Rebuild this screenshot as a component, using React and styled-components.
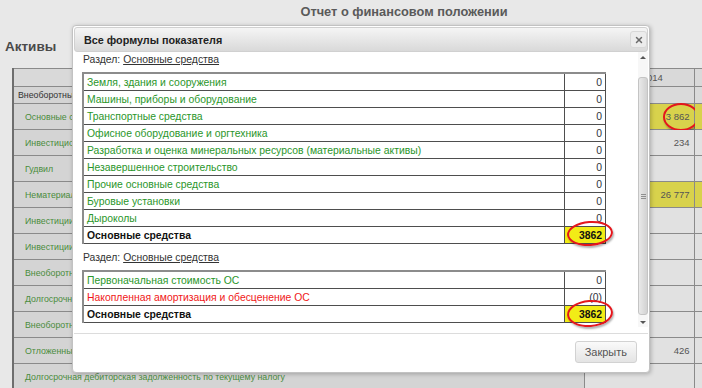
import React from "react";
import styled, { createGlobalStyle } from "styled-components";
import { X } from "lucide-react";

const GlobalStyle = createGlobalStyle`
  body {
    margin: 0;
    font-family: "Liberation Sans", Arial, sans-serif;
  }
`;

// фон: строки отчета
const reportRows = [
  { label: "Внеоборотные активы", group: true },
  { label: "Основные средства", value: "3 862", mark: true, circled: true },
  { label: "Инвестиционная недвижимость", value: "234" },
  { label: "Гудвил" },
  { label: "Нематериальные активы", value: "26 777", mark: true },
  { label: "Инвестиции в ассоциированные компании" },
  { label: "Инвестиции в совместные предприятия" },
  { label: "Внеоборотные биологические активы" },
  { label: "Долгосрочная торговая и прочая дебиторская задолженность" },
  { label: "Внеоборотные финансовые активы" },
  { label: "Отложенные налоговые активы", value: "426" },
  { label: "Долгосрочная дебиторская задолженность по текущему налогу" },
];

const firstSection = [
  "Земля, здания и сооружения",
  "Машины, приборы и оборудование",
  "Транспортные средства",
  "Офисное оборудование и оргтехника",
  "Разработка и оценка минеральных ресурсов (материальные активы)",
  "Незавершенное строительство",
  "Прочие основные средства",
  "Буровые установки",
  "Дыроколы",
];

const secondSection = [
  { label: "Первоначальная стоимость ОС", value: "0", tone: "green" },
  { label: "Накопленная амортизация и обесценение ОС", value: "(0)", tone: "red" },
];

const App = () => {
  return (
    <Page>
      <GlobalStyle />
      <ReportTitle>Отчет о финансовом положении</ReportTitle>
      <SectionTitle>Активы</SectionTitle>

      <ReportTable>
        <colgroup>
          <col style={{ width: 571 }} />
          <col style={{ width: 110 }} />
          <col style={{ width: 100 }} />
        </colgroup>
        <tbody>
          <tr>
            <HeadCell />
            <HeadCell>31.12.2014</HeadCell>
            <HeadCell>31.12.2013</HeadCell>
          </tr>
          {reportRows.map((row, i) => (
            <tr key={i}>
              <LabelCell group={row.group}>{row.label}</LabelCell>
              <ValueCell group={row.group} mark={row.mark}>
                {row.value}
                {row.circled && <BgCircle />}
              </ValueCell>
              <ValueCell group={row.group} mark={row.mark} />
            </tr>
          ))}
        </tbody>
      </ReportTable>

      <Dialog>
        <TitleBar>
          <DialogTitle>Все формулы показателя</DialogTitle>
          <CloseButton>
            <X size={10} strokeWidth={3.5} color="#6a6a6a" />
          </CloseButton>
        </TitleBar>

        <DialogBody>
          <Content>
            <SectionLine>
              Раздел: <SectionLink>Основные средства</SectionLink>
            </SectionLine>
            <FormulaTable>
              <tbody>
                {firstSection.map((label, i) => (
                  <tr key={i}>
                    <FCell tone="green">{label}</FCell>
                    <FNum>0</FNum>
                  </tr>
                ))}
                <tr>
                  <FCell total>Основные средства</FCell>
                  <FNum total>
                    3862
                    <Ring top={-6} height={26} />
                  </FNum>
                </tr>
              </tbody>
            </FormulaTable>

            <SectionLine spaced>
              Раздел: <SectionLink>Основные средства</SectionLink>
            </SectionLine>
            <FormulaTable>
              <tbody>
                {secondSection.map((row, i) => (
                  <tr key={i}>
                    <FCell tone={row.tone}>{row.label}</FCell>
                    <FNum>{row.value}</FNum>
                  </tr>
                ))}
                <tr>
                  <FCell total>Основные средства</FCell>
                  <FNum total>
                    3862
                    <Ring top={-6} height={28} />
                  </FNum>
                </tr>
              </tbody>
            </FormulaTable>
          </Content>

          <Scrollbar>
            <Arrow up />
            <Track>
              <Thumb>
                <Grip />
              </Thumb>
            </Track>
            <Arrow />
          </Scrollbar>
        </DialogBody>

        <ButtonPane>
          <Button>Закрыть</Button>
        </ButtonPane>
      </Dialog>
    </Page>
  );
};

const Page = styled.div`
  position: relative;
  width: 702px;
  height: 388px;
  overflow: hidden;
  background: #e8e8e8;
`;

const ReportTitle = styled.h1`
  margin: 0;
  padding: 3px 0 0 106px;
  text-align: center;
  font-size: 12.8px;
  line-height: 18px;
  color: #5a5a5a;
`;

const SectionTitle = styled.h2`
  margin: 17px 0 0 5px;
  font-size: 13.5px;
  line-height: 18px;
  color: #4a4a4a;
`;

const ReportTable = styled.table`
  margin: 12px 0 0 12px;
  width: 781px;
  table-layout: fixed;
  border-collapse: collapse;
  border-left: 2px solid #6e6e6e;
  font-size: 8.8px;
  color: #555;
`;

const HeadCell = styled.td`
  height: 17px;
  padding: 0;
  border: 1px solid #8a8a8a;
  background: #d9d9d9;
  font-size: 9.5px;
  text-align: center;
  white-space: nowrap;
  overflow: hidden;
`;

const LabelCell = styled.td`
  height: ${(p) => (p.group ? "16px" : "25px")};
  padding: 0 0 0 ${(p) => (p.group ? "4px" : "11px")};
  border: 1px solid #8a8a8a;
  background: #d4d4d4;
  color: ${(p) => (p.group ? "#333" : "#4a8c3c")};
  white-space: nowrap;
  overflow: hidden;
`;

const ValueCell = styled.td`
  position: relative;
  padding: 0 4px 0 0;
  border: 1px solid #8a8a8a;
  background: ${(p) => (p.mark ? "#d8d24c" : p.group ? "#dadada" : "#e1e1e1")};
  font-size: 9.5px;
  text-align: right;
  white-space: nowrap;
`;

const BgCircle = styled.span`
  position: absolute;
  left: 78px;
  top: -1px;
  width: 32px;
  height: 24px;
  border: 2.5px solid #e4161c;
  border-radius: 50%;
  box-shadow: 1px 2px 2px rgba(0, 0, 0, 0.3);
`;

const Dialog = styled.div`
  position: absolute;
  left: 72px;
  top: 25px;
  width: 578px;
  height: 348px;
  box-sizing: border-box;
  padding: 1px;
  display: flex;
  flex-direction: column;
  border: 1px solid #c2c2c2;
  border-radius: 4px;
  background: #fff;
  box-shadow: 1px 1px 4px rgba(0, 0, 0, 0.25);
  font-size: 10.4px;
  color: #333;
`;

const TitleBar = styled.div`
  height: 25px;
  box-sizing: border-box;
  display: flex;
  align-items: center;
  justify-content: space-between;
  padding: 0 0 0 9px;
  border: 1px solid #d0d0d0;
  border-radius: 3px;
  background: linear-gradient(#f5f5f5, #d9d9d9);
`;

const DialogTitle = styled.span`
  font-size: 10.8px;
  font-weight: bold;
  color: #222;
`;

const CloseButton = styled.span`
  width: 15px;
  height: 15px;
  display: flex;
  align-items: center;
  justify-content: center;
  border: 1px solid #d8d8d8;
  border-radius: 3px;
  background: #ececec;
`;

const DialogBody = styled.div`
  height: 281px;
  display: flex;
`;

const Content = styled.div`
  flex: 1;
  padding: 1px 0 0 8px;
  overflow: hidden;
`;

const SectionLine = styled.div`
  line-height: 13px;
  margin-top: ${(p) => (p.spaced ? "7px" : "0")};
  padding-left: 1px;
`;

const SectionLink = styled.span`
  text-decoration: underline;
`;

const FormulaTable = styled.table`
  margin-top: 6px;
  width: 524px;
  table-layout: fixed;
  border-collapse: collapse;
  border-left: 2px solid #8c8c8c;
  border-top: 2px solid #8c8c8c;
`;

const FCell = styled.td`
  height: 16px;
  padding: 0 3px;
  line-height: 15px;
  border: 1px solid #4e4e4e;
  font-weight: ${(p) => (p.total ? "bold" : "normal")};
  color: ${(p) =>
    p.tone === "green" ? "#2a962a" : p.tone === "red" ? "#f01818" : "#111"};
  white-space: nowrap;
`;

const FNum = styled.td`
  position: relative;
  width: 34px;
  padding: 0 3px;
  border: 1px solid #4e4e4e;
  text-align: right;
  font-weight: ${(p) => (p.total ? "bold" : "normal")};
  background: ${(p) => (p.total ? "#f2ec16" : "#fff")};
  color: ${(p) => (p.total ? "#111" : "#2f3440")};
`;

const Ring = styled.span`
  position: absolute;
  left: 2px;
  top: ${(p) => p.top}px;
  width: 42px;
  height: ${(p) => p.height - 5}px;
  border: 2.5px solid #e4161c;
  border-radius: 50%;
  box-shadow: 1px 2px 2px rgba(0, 0, 0, 0.3);
  transform: rotate(-4deg);
`;

const Scrollbar = styled.div`
  width: 10px;
  height: 275px;
  display: flex;
  flex-direction: column;
  background: #f7f7f7;
`;

const Arrow = styled.div`
  height: 10px;
  display: flex;
  align-items: center;
  justify-content: center;

  &::after {
    content: "";
    border-left: 3px solid transparent;
    border-right: 3px solid transparent;
    ${(p) =>
      p.up ? "border-bottom: 3px solid #555;" : "border-top: 3px solid #555;"}
  }
`;

const Track = styled.div`
  flex: 1;
  padding-top: 15px;
`;

const Thumb = styled.div`
  height: 238px;
  box-sizing: border-box;
  display: flex;
  align-items: center;
  justify-content: center;
  border: 1px solid #c4c4c4;
  border-radius: 3px;
  background: linear-gradient(90deg, #e9e9e9, #d2d2d2);
`;

const Grip = styled.div`
  width: 5px;
  height: 5px;
  background: repeating-linear-gradient(#8f8f8f 0 1px, transparent 1px 2px);
`;

const ButtonPane = styled.div`
  flex: 1;
  display: flex;
  justify-content: flex-end;
  align-items: flex-start;
  padding: 7px 11px 0 0;
  border-top: 1px solid #dcdcdc;
`;

const Button = styled.button`
  height: 22px;
  padding: 0 9px;
  border: 1px solid #d2d2d2;
  border-radius: 3px;
  background: linear-gradient(#fafafa, #e4e4e4);
  font-family: "Liberation Sans", Arial, sans-serif;
  font-size: 11px;
  color: #555;
`;

export default App;
